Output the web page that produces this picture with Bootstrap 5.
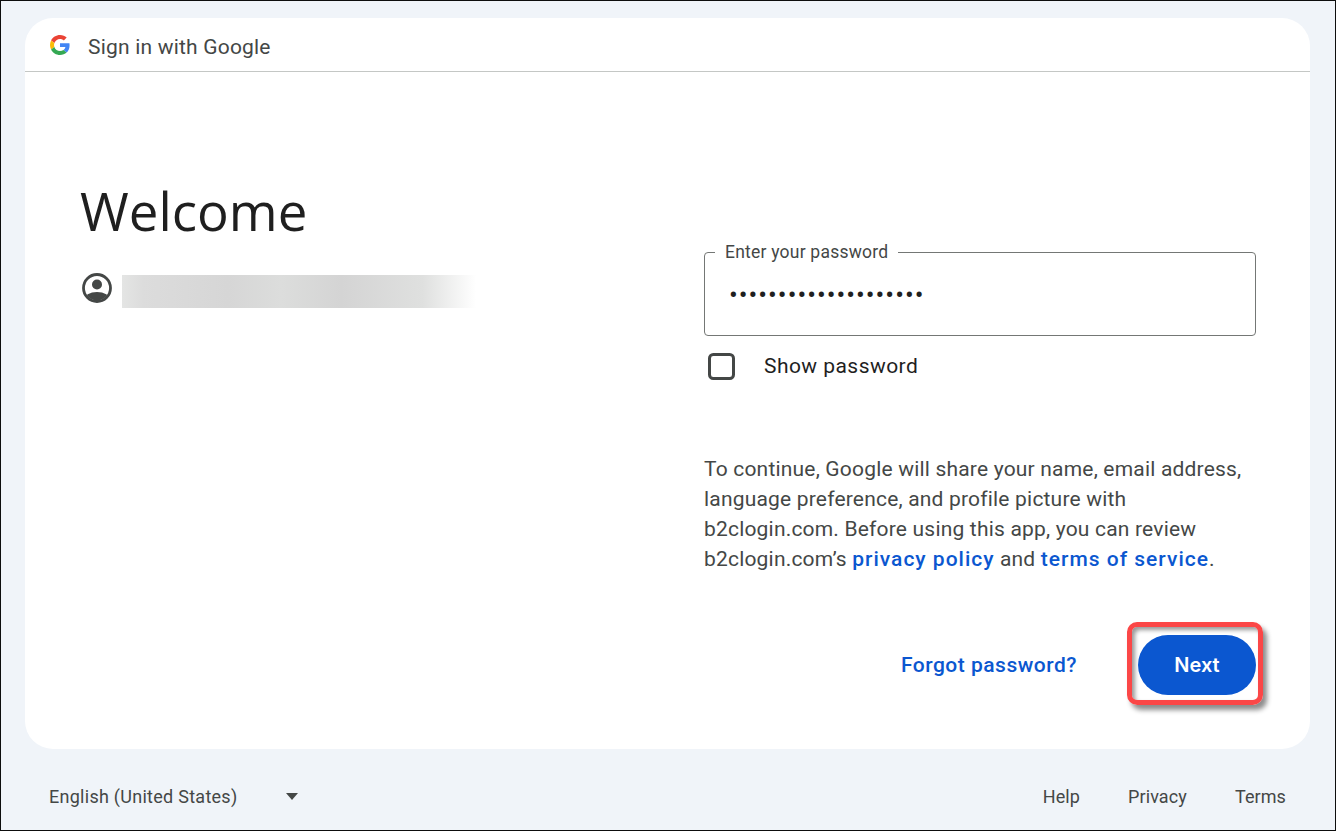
<!DOCTYPE html>
<html lang="en">
<head>
<meta charset="utf-8">
<title>Sign in with Google</title>
<link rel="stylesheet" href="https://cdn.jsdelivr.net/npm/bootstrap@5.3.0/dist/css/bootstrap.min.css">
<style>
html,body{height:100%;}
body{background:#f0f4f9;font-family:Roboto,"Liberation Sans",sans-serif;color:#444746;margin:0;}
.frame{height:831px;border:1px solid #0d0d0d;padding:17px 25px 0 24px;}
.sheet{height:731px;background:#fff;border-radius:28px;}
.sheet-head{height:54px;border-bottom:1px solid #c4c7c5;padding:0 0 0 25px;gap:18px;font-size:21px;letter-spacing:.2px;color:#444746;}
.sheet-head svg{width:20px;height:20px;}
.sheet-head span{padding-top:7px;}
.sheet-main{padding:0 54px 0 55px;height:676px;}
.leftcol{width:624px;padding-top:104px;}
.rightcol{width:552px;padding-top:180px;}
.title{font-family:"Open Sans",Roboto,sans-serif;font-size:52.8px;line-height:70px;font-weight:400;color:#1f1f1f;margin:0;}
.acct{margin-top:29px;padding-left:2px;gap:10px;height:33px;}
.acct svg{width:30px;height:30px;margin-top:-2px;}
.blurbar{width:354px;height:33px;background:linear-gradient(90deg,#e4e5e4 0,#dcdcdc 6%,#d6d6d6 30%,#dcdddc 45%,#d4d4d4 62%,#dfe0df 85%,#fff 100%);}
.pwfield{height:84px;border:1px solid #747775;border-radius:4px;padding:0 24px;}
.pwlabel{left:10px;top:-11px;background:#fff;padding:0 10px;font-size:17.5px;letter-spacing:.22px;line-height:20px;color:#444746;}
.pwinput{border:0;padding:2px 0 0;height:82px;font-size:26px;letter-spacing:1px;color:#1f1f1f;background:transparent;box-shadow:none;}
.pwinput:focus{box-shadow:none;}
.showrow{margin-top:17px;padding-left:4px;gap:29px;height:27px;font-size:21px;letter-spacing:.45px;color:#1f1f1f;}
.tick{width:27px;height:27px;margin:0;border:3px solid #444746;border-radius:2px;float:none;}
.blurb{margin:74px 0 0;font-size:21px;letter-spacing:.19px;line-height:30px;color:#444746;}
.blurb a{letter-spacing:1px;}
.blurb a,.forgot{color:#0b57d0;font-weight:500;text-decoration:none;}
.actions{margin-top:48px;height:83px;}
.forgot{font-size:21px;letter-spacing:.5px;margin-right:50px;margin-top:4px;}
.callout{width:136px;height:83px;margin-right:-7px;border:5px solid #fb4747;border-radius:10px;box-shadow:4px 5px 5px rgba(0,0,0,.45),inset 3px 3px 4px rgba(0,0,0,.4);padding-left:6px;padding-top:8px;}
.nextbtn{width:118px;height:60px;background:#0b57d0;border:0;border-radius:30px;color:#fff;font-family:Inter,Roboto,sans-serif;font-weight:600;font-size:20px;padding:0;}
.sheet-foot{height:82px;padding:13px 24px 0 24px;font-size:18px;color:#444746;}
.langpick{gap:49px;letter-spacing:.27px;}
.caret-tri{width:0;height:0;border-left:6.5px solid transparent;border-right:6.5px solid transparent;border-top:7px solid #444746;}
.footlinks{gap:48px;letter-spacing:.1px;}
.footlinks a{color:#444746;text-decoration:none;}
</style>
</head>
<body>
<div class="frame">
  <div class="sheet">
    <div class="sheet-head d-flex align-items-center">
      <svg viewBox="0 0 48 48" aria-hidden="true">
        <path fill="#EA4335" d="M24 9.5c3.54 0 6.71 1.22 9.21 3.6l6.85-6.85C35.9 2.38 30.47 0 24 0 14.62 0 6.51 5.38 2.56 13.22l7.98 6.19C12.43 13.72 17.74 9.5 24 9.5z"/>
        <path fill="#4285F4" d="M46.98 24.55c0-1.57-.15-3.09-.38-4.55H24v9.02h12.94c-.58 2.96-2.26 5.48-4.78 7.18l7.73 6c4.51-4.18 7.09-10.36 7.09-17.65z"/>
        <path fill="#FBBC05" d="M10.53 28.59c-.48-1.45-.76-2.99-.76-4.59s.27-3.14.76-4.59l-7.98-6.19C.92 16.46 0 20.12 0 24c0 3.88.92 7.54 2.56 10.78l7.97-6.19z"/>
        <path fill="#34A853" d="M24 48c6.48 0 11.93-2.13 15.89-5.81l-7.73-6c-2.15 1.45-4.92 2.3-8.16 2.3-6.26 0-11.57-4.22-13.47-9.91l-7.98 6.19C6.51 42.62 14.62 48 24 48z"/>
      </svg>
      <span>Sign in with Google</span>
    </div>
    <div class="sheet-main d-flex">
      <div class="leftcol">
        <h1 class="title">Welcome</h1>
        <div class="acct d-flex">
          <svg viewBox="0 0 30 30" aria-hidden="true">
            <defs><clipPath id="cp"><circle cx="15" cy="15" r="12.4"/></clipPath></defs>
            <circle cx="15" cy="15" r="13.5" fill="none" stroke="#444746" stroke-width="2.8"/>
            <circle cx="15" cy="11.5" r="5" fill="#444746"/>
            <ellipse cx="15" cy="27" rx="13" ry="8" fill="#444746" clip-path="url(#cp)"/>
          </svg>
          <div class="blurbar"></div>
        </div>
      </div>
      <div class="rightcol">
        <div class="pwfield position-relative">
          <label class="pwlabel position-absolute" for="pw">Enter your password</label>
          <input id="pw" class="form-control pwinput" type="password" value="aaaaaaaaaaaaaaaaaaaa" readonly>
        </div>
        <div class="showrow d-flex align-items-center">
          <input class="form-check-input tick" type="checkbox" id="sp">
          <label for="sp">Show password</label>
        </div>
        <p class="blurb">To continue, Google will share your name, email address, language preference, and profile picture with b2clogin.com. Before using this app, you can review b2clogin.com’s <a href="#">privacy policy</a> and <a href="#">terms of service</a>.</p>
        <div class="actions d-flex align-items-center justify-content-end">
          <a class="forgot" href="#">Forgot password?</a>
          <div class="callout"><button class="btn nextbtn" type="button">Next</button></div>
        </div>
      </div>
    </div>
  </div>
  <div class="sheet-foot d-flex align-items-center justify-content-between">
    <div class="langpick d-flex align-items-center"><span>English (United States)</span><span class="caret-tri"></span></div>
    <div class="footlinks d-flex"><a href="#">Help</a><a href="#">Privacy</a><a href="#">Terms</a></div>
  </div>
</div>
<script src="https://cdn.jsdelivr.net/npm/bootstrap@5.3.0/dist/js/bootstrap.bundle.min.js"></script>
</body>
</html>
